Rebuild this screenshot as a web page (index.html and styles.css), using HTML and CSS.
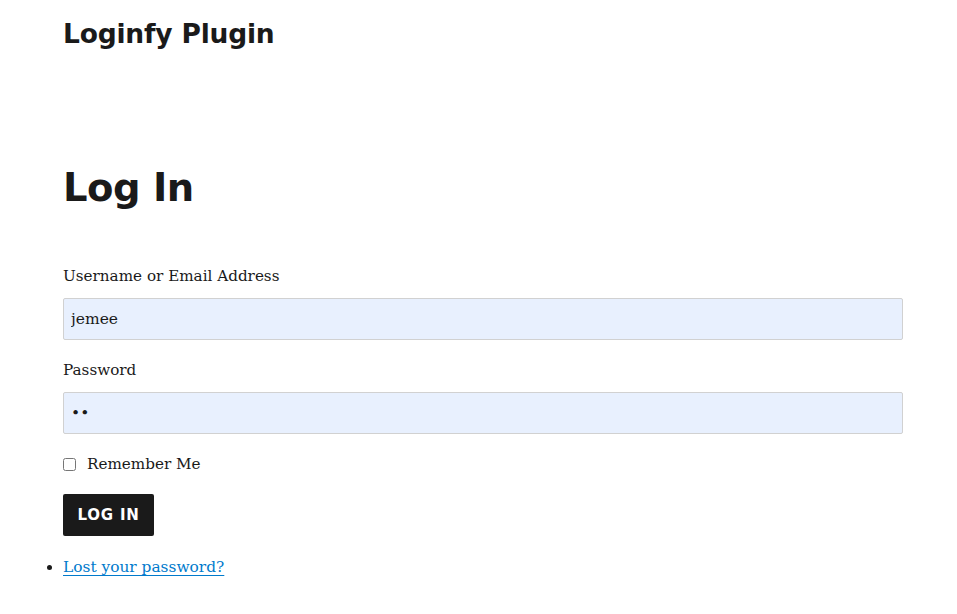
FILE: index.html
```html
<!DOCTYPE html>
<html>
<head>
<meta charset="utf-8">
<link rel="stylesheet" href="styles.css">
</head>
<body>
<div class="page">
  <header class="site-header">
    <p class="site-title">Loginfy Plugin</p>
  </header>
  <main class="content">
    <h1 class="page-title">Log In</h1>
    <form class="login-form">
      <div class="field">
        <label class="label" for="user">Username or Email Address</label>
        <input class="input" id="user" type="text" value="jemee">
      </div>
      <div class="field">
        <label class="label" for="pass">Password</label>
        <input class="input" id="pass" type="password" value="ab">
      </div>
      <div class="remember">
        <input class="check" id="rem" type="checkbox">
        <label class="remember-label" for="rem">Remember Me</label>
      </div>
      <button class="submit" type="button">Log In</button>
    </form>
    <ul class="links">
      <li><a class="link" href="#">Lost your password?</a></li>
    </ul>
  </main>
</div>
</body>
</html>
```
FILE: styles.css
```css
* { box-sizing: border-box; }
html, body { margin: 0; padding: 0; background: #fff; }
body {
  font-family: "DejaVu Serif", "Liberation Serif", serif;
  color: #1a1a1a;
  font-size: 15px;
}
.page { padding: 0 54px 0 63px; }
.site-header { padding-top: 17px; height: 158px; }
.site-title {
  margin: 0;
  font-family: "DejaVu Sans", sans-serif;
  font-weight: bold;
  font-size: 26.5px;
  line-height: 34px;
  letter-spacing: -0.2px;
}
.page-title {
  margin: 0 0 50px;
  font-family: "DejaVu Sans", sans-serif;
  font-weight: bold;
  font-size: 38.5px;
  line-height: 60px;
  letter-spacing: -0.5px;
}
.field { display: flex; flex-direction: column; margin-bottom: 22px; }
.label { font-size: 15.2px; line-height: 24px; margin-bottom: 10px; margin-top: -4px; }
.input {
  width: 840px;
  height: 42px;
  border: 1px solid #d1d1d1;
  border-radius: 2px;
  background: #e8f0fe;
  font-family: "DejaVu Serif", serif;
  font-size: 15.5px;
  color: #1a1a1a;
  padding: 0 7px;
  margin: 0;
}
.remember { display: flex; align-items: center; gap: 11px; height: 24px; margin-top: -4px; }
.check { margin: 0; width: 13px; height: 13px; }
.remember-label { font-size: 15.2px; line-height: 24px; }
.submit {
  display: block;
  margin-top: 18px;
  width: 91px;
  height: 42px;
  background: #1a1a1a;
  color: #fff;
  border: 0;
  border-radius: 2px;
  font-family: "DejaVu Sans", sans-serif;
  font-weight: bold;
  font-size: 15px;
  text-transform: uppercase;
  letter-spacing: 0.8px;
  padding: 0;
}
.links { margin: 16px 0 0; padding-left: 0; }
.link { color: #007acc; font-size: 15.4px; line-height: 30px; text-decoration: underline; text-decoration-thickness: 1px; text-underline-offset: 3px; }
```
